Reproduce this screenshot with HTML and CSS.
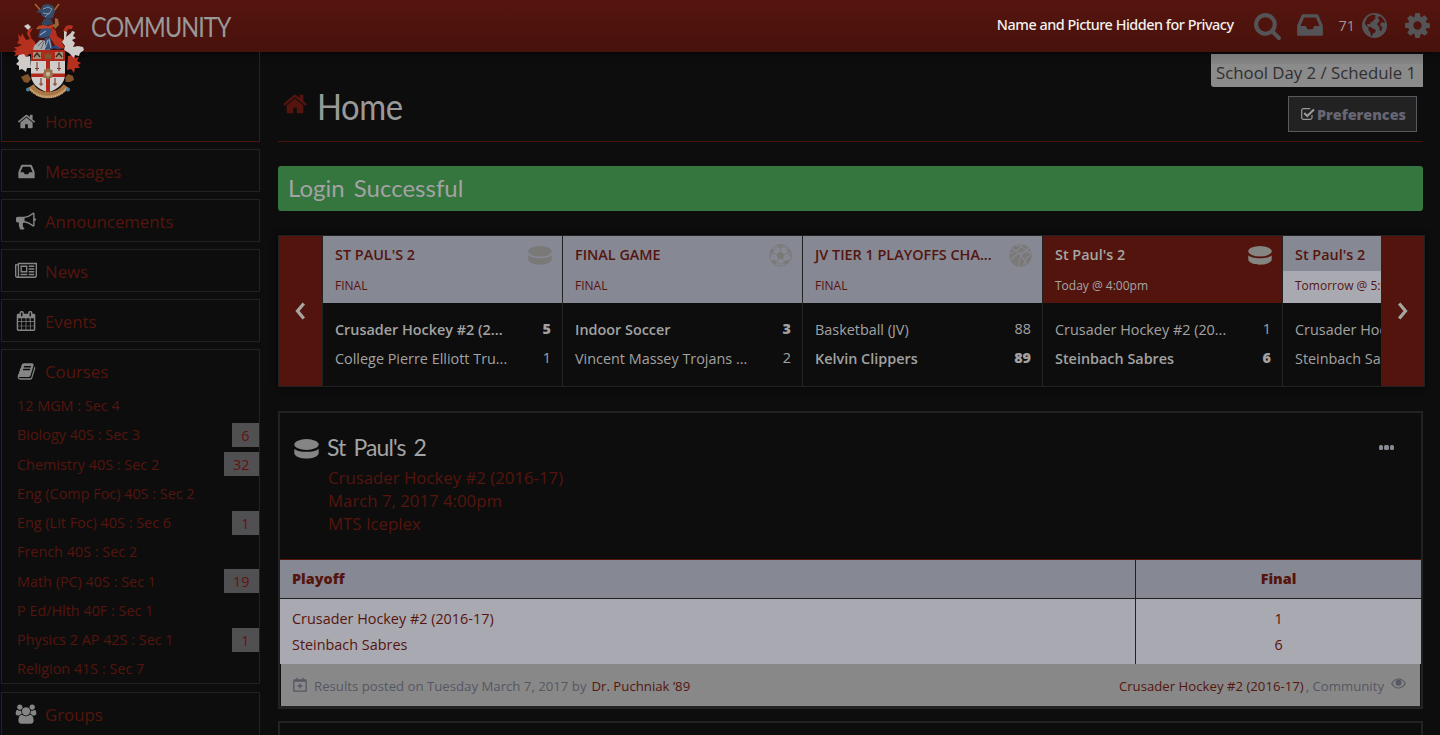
FILE: index.html
```html
<!DOCTYPE html>
<html lang="en">
<head>
<meta charset="utf-8">
<title>Community</title>
<link rel="stylesheet" href="styles.css">
</head>
<body>
<svg class="defs" width="0" height="0">
  <symbol id="home" viewBox="0 0 1792 1792"><path d="M1472 992v480q0 26-19 45t-45 19h-384v-384h-256v384h-384q-26 0-45-19t-19-45v-480q0-1 .5-3t.5-3l575-474 575 474q1 2 1 6zm223-69l-62 74q-8 9-21 11h-3q-13 0-21-7l-692-577-692 577q-12 8-24 7-13-2-21-11l-62-74q-8-10-7-23.500t11-21.500l719-599q32-26 76-26t76 26l244 204v-195q0-14 9-23t23-9h192q14 0 23 9t9 23v408l219 182q10 8 11 21.500t-7 23.500z"/></symbol>
  <symbol id="search" viewBox="0 0 1792 1792"><path d="M1216 832q0-185-131.500-316.500t-316.500-131.500-316.500 131.500-131.500 316.500 131.500 316.500 316.500 131.500 316.500-131.500 131.500-316.500zm512 832q0 52-38 90t-90 38q-54 0-90-38l-343-342q-179 124-399 124-143 0-273.500-55.500t-225-150-150-225-55.500-273.500 55.500-273.500 150-225 225-150 273.500-55.500 273.500 55.500 225 150 150 225 55.500 273.500q0 220-124 399l343 343q37 37 37 90z"/></symbol>
  <symbol id="inbox" viewBox="0 0 1792 1792"><path d="M1151 960h316q-1-3-2.500-8t-2.500-8l-212-496h-708l-212 496q-1 2-2.500 8t-2.500 8h316l95 192h320zm513 30v482q0 26-19 45t-45 19h-1408q-26 0-45-19t-19-45v-482q0-62 25-123l238-552q10-25 36.500-42t52.500-17h832q26 0 52.500 17t36.500 42l238 552q25 61 25 123z"/></symbol>
  <symbol id="gear" viewBox="0 0 1792 1792"><path d="M1152 896q0-106-75-181t-181-75-181 75-75 181 75 181 181 75 181-75 75-181zm512-109v222q0 12-8 23t-20 13l-185 28q-19 54-39 91 35 50 107 138 10 12 10 25t-9 23q-27 37-99 108t-94 71q-12 0-26-9l-138-108q-44 23-91 38-16 136-29 186-7 28-36 28h-222q-14 0-24.500-8.500t-11.500-21.500l-28-184q-49-16-90-37l-141 107q-10 9-25 9-14 0-25-11-126-114-165-168-7-10-7-23 0-12 8-23 15-21 51-66.500t54-70.500q-27-50-41-99l-183-27q-13-2-21-12.500t-8-23.500v-222q0-12 8-23t19-13l186-28q14-46 39-92-40-57-107-138-10-12-10-24 0-10 9-23 26-36 98.500-107.500t94.500-71.500q13 0 26 10l138 107q44-23 91-38 16-136 29-186 7-28 36-28h222q14 0 24.500 8.500t11.500 21.500l28 184q49 16 90 37l142-107q9-9 24-9 13 0 25 10 129 119 165 170 7 8 7 22 0 12-8 23-15 21-51 66.500t-54 70.500q26 50 41 98l183 28q13 2 21 12.500t8 23.500z"/></symbol>
  <symbol id="users" viewBox="0 0 2048 1792"><path d="M657 896q-162 5-265 128h-134q-82 0-138-40.500t-56-118.500q0-353 124-353 6 0 43.500 21t97.500 42.500 119 21.500q67 0 133-23-5 37-5 66 0 139 81 256zm1071 637q0 120-73 189.500t-194 69.500h-874q-121 0-194-69.500t-73-189.500q0-53 3.500-103.500t14-109 26.500-108.500 43-97.500 62-81 85.500-53.500 111.500-20q10 0 43 21.500t73 48 107 48 135 21.500 135-21.500 107-48 73-48 43-21.500q61 0 111.500 20t85.500 53.500 62 81 43 97.500 26.500 108.500 14 109 3.500 103.500zm-1024-1277q0 106-75 181t-181 75-181-75-75-181 75-181 181-75 181 75 75 181zm704 384q0 159-112.500 271.500t-271.500 112.500-271.500-112.500-112.500-271.500 112.500-271.500 271.500-112.500 271.500 112.500 112.500 271.500zm576 225q0 78-56 118.500t-138 40.500h-134q-103-123-265-128 81-117 81-256 0-29-5-66 66 23 133 23 59 0 119-21.500t97.500-42.500 43.500-21q124 0 124 353zm-128-609q0 106-75 181t-181 75-181-75-75-181 75-181 181-75 181 75 75 181z"/></symbol>
  <symbol id="calendar" viewBox="0 0 1792 1792"><path fill-rule="evenodd" d="M64 384q0-128 128-128h128v-96q0-160 160-160h64q160 0 160 160v96h384v-96q0-160 160-160h64q160 0 160 160v96h128q128 0 128 128v1280q0 128-128 128H192q-128 0-128-128zM448 160v288q0 32 32 32h64q32 0 32-32V160q0-32-32-32h-64q-32 0-32 32zm768 0v288q0 32 32 32h64q32 0 32-32V160q0-32-32-32h-64q-32 0-32 32zM192 640v288h288V640zm352 0v288h320V640zm384 0v288h288V640zm384 0v288h288V640zM192 992v320h288V992zm352 0v320h320V992zm384 0v320h320V992zm384 0v320h288V992zM192 1376v288h288v-288zm352 0v288h320v-288zm384 0v288h320v-288zm384 0v288h288v-288z"/></symbol>
  <symbol id="book" viewBox="0 0 1792 1792"><path d="M1703 478q40 57 18 129l-275 906q-19 64-76.500 107.500t-122.500 43.500h-923q-77 0-148.500-53.500t-99.500-131.500q-24-67-2-127 0-4 3-27t4-37q1-8-3-21.500t-3-19.500q2-11 8-21t16.500-23.500 16.500-23.500q23-38 45-91.500t30-91.500q3-10 .5-30t-.5-28q3-11 17-28t17-23q21-36 42-92t25-90q1-9-2.500-32t.5-28q4-13 22-30.500t22-22.500q19-26 42.500-84.500t27.500-96.500q1-8-3-25.500t-2-26.500q2-8 9-18t18-23 17-21q8-12 16.500-30.500t15-35 16-36 19.500-32 26.500-23.500 36-11.500 47.500 5.500l-1 3q38-9 51-9h761q74 0 114 56t18 130l-274 906q-36 119-71.500 153.500t-128.500 34.500h-869q-27 0-38 15-11 16-1 43 24 70 144 70h923q29 0 56-15.500t35-41.500l300-987q7-22 5-57 38 15 59 43zm-1064 2q-4 13 2 22.500t20 9.500h608q13 0 25.500-9.500t16.500-22.500l21-64q4-13-2-22.500t-20-9.500h-608q-13 0-25.500 9.500t-16.500 22.500zm-83 256q-4 13 2 22.500t20 9.500h608q13 0 25.500-9.500t16.500-22.500l21-64q4-13-2-22.500t-20-9.500h-608q-13 0-25.500 9.500t-16.500 22.500z"/></symbol>
  <symbol id="bullhorn" viewBox="0 0 1792 1792"><path d="M1664 640q53 0 90.500 37.500t37.500 90.500-37.500 90.500-90.500 37.500v384q0 52-38 90t-90 38q-417-347-812-380-58 19-91 66t-31 100.500 40 92.500q-20 33-23 65.500t6 58 33.500 55 48 50 61.500 50.500q-29 58-111.500 83t-168.500 11.500-132-55.500q-7-23-29.500-87.500t-32-94.500-23-89-15-101 3.500-98.500 22-110.500h-122q-66 0-113-47t-47-113v-192q0-66 47-113t113-47h480q435 0 896-384 52 0 90 38t38 90v384zm-128 604v-954q-394 302-768 343v270q377 42 768 341z"/></symbol>
  <symbol id="news" viewBox="0 0 2048 1792"><path d="M1024 512h-384v384h384v-384zm128 640v128h-640v-128h640zm0-768v640h-640v-640h640zm640 768v128h-512v-128h512zm0-256v128h-512v-128h512zm0-256v128h-512v-128h512zm0-256v128h-512v-128h512zm-1536 960v-960h-128v960q0 26 19 45t45 19 45-19 19-45zm1664 0v-1088h-1536v1088q0 33-11 64h1483q26 0 45-19t19-45zm128-1216v1216q0 80-56 136t-136 56h-1664q-80 0-136-56t-56-136v-1088h256v-128h1792z"/></symbol>
  <symbol id="soccer" viewBox="0 0 23 23"><g class="lace"><circle cx="11.500" cy="11.500" r="10.800"/><path d="M11.500 8V4M15 10.500l4-1.500M13.500 14.500l2.500 4M9.500 14.500L7 18.500M8 10.500L4 9M11.500 4L6.500 2.500M11.500 4l5-1.500M19 9l-1.500-5M19 9l3 4M16 18.500l4-1.500M16 18.500l-4.500 1.500L7 18.500M7 18.500L3 17M4 9l-3 4M4 9l1.500-5"/></g><path d="M11.500 7.500l4 2.900-1.500 4.600H9l-1.500-4.600zM8 1l3.500 2.200L15 1l-3.500-.7zM19 4l.3 4 3 2.500-.8-4zM4 4l-.3 4-3 2.500.8-4zM20.500 15.500l-4.300 1.200-.4 4 3-2zM2.500 15.500l4.300 1.200.4 4-3-2z"/></symbol>
  <symbol id="puck" viewBox="0 0 24 19"><ellipse cx="12" cy="5.200" rx="11.700" ry="5.200"/><path d="M.3 9.200C2 11.200 6.500 12.200 12 12.200S22 11.200 23.700 9.200V14C22.500 17 17.500 18.700 12 18.700S1.500 17 .3 14z"/></symbol>
  <symbol id="globe" viewBox="0 0 24 24"><path fill-rule="evenodd" d="M12 0a12 12 0 1 0 0 24 12 12 0 0 0 0-24zM5.500 3.800L9 1.900l2.600-.3 1.800 1-1.300 1.600 1.200.8-2 1.600-1.300 1.800-2.200.8.600 1.900-1.900-.8-1.900.7 1.200 2.200 2.700.3 2.600 1.800 2.400 1-.9 2.400-2.200 1-1 2.700-1-.6-.3-3.200-2-2.300.2-2.200-2.600-2-1-2.800zM15 3.600l3.300-.2 2.900 3.600 1 2.800-2.200-.9-2 .7-.6 2.300 2.300 1.900-1.200 3.400-1.600-.5-.2-3.400-2-1.500.3-2.500 2-1.400z"/></symbol>
  <symbol id="ball" viewBox="0 0 22 22"><circle cx="11" cy="11" r="10.800"/><g class="seam"><path d="M2.500 4.500C7 6.500 13 11 17 19.800M12.500 0C11 4.500 7 8 .2 9M1.500 16C5 10 12 6.300 21 8M7 1c5 1.500 10 4 14.800 9M9.500 22C9 15 12 8 19 4M14.500 21.500c-.8-4 .8-8 6.800-11"/></g></symbol>
  <symbol id="prev" viewBox="0 0 10 18"><path class="line" d="M8.300 1.500 2 9l6.300 7.500"/></symbol>
</svg>

<header class="topbar">
  <div class="brand">COMMUNITY</div>
  <nav class="tools">
    <span class="user">Name and Picture Hidden for Privacy</span>
    <svg class="t-search"><use href="#search"/></svg>
    <svg class="t-inbox"><use href="#inbox"/></svg>
    <span class="count">71</span>
    <svg class="t-globe"><use href="#globe"/></svg>
    <svg class="t-gear"><use href="#gear"/></svg>
  </nav>
</header>

<svg class="crest" viewBox="10 0 76 100">
  <path d="M35 4l7 8M59 4l-6 8" stroke="#9b6a35" stroke-width="1.600"/>
  <g fill="#b5301f">
    <path d="M33 28l-5 2-1 4 3 5-4 1-4-7-1 4-3-3 1 6-2 3 5 2-5 2-3 0 3 3-4 1 3 2-2 3 5-1-1 3 6-2 2 3 3-5 3 0 5-6-2-6-4-4-1-5z"/>
    <path d="M52 27l4 4 1 5 6 4-1 3 3 5-8 1-8-13zM66 26l4-1 3 1-1 3-4 0-2 4-3-2zM68 56l5-1 2 3 4-1-2 4 4 2-3 2 2 3-5 0-1 5-3-4-4 1z"/>
  </g>
  <g fill="#cecbc9">
    <path d="M24 26l4-2 3 3-3 3-2-2zM19 55l5-1 2 3 4-1 1 12-4 0-1 4-4-3-3 1 0-4-3-2 3-3-2-3zM64 31l3 1-1 5 5-4 1-2 3 1-2 4 3 2-4 2 3 3-2 4 5-1 5 1 1 3-4 3-1 3-4-1-1 3-5-5-5-3 1-4-3-4 2-3z"/>
    <path d="M40 40l-6 6-1 4h17l-2-9z" fill="#a9a9ab"/>
  </g>
  <path d="M38 46l5-5M41 49l3-7" stroke="#4b5666" stroke-width=".8"/>
  <path d="M43 5l5-1 5 2 2 5-2 7-6 1-5-3-1-3-5-1 5-3z" fill="#344b69"/>
  <path d="M43 9l5-2 4 2M43 13l6 1 3-5M45 17l4-4" fill="none" stroke="#8298b2" stroke-width="1"/>
  <path d="M44 19h7l2 5-9 2-3-2z" fill="#30445f"/>
  <path d="M38 26l5-1 5 1 6-2 1 2-5 3-7 0-5 0z" fill="#b94027"/>
  <path d="M40 30l5-2 7 1-2 7-7 2-5-1zM45 38l5-1 3 12-8 1z" fill="#34507a"/>
  <path d="M40 35l6-4M45 48l3-8M51 48l-2-9" stroke="#8ea2ba" stroke-width="1.200"/>
  <path d="M55 18l3 1 1 6-4 4-2-4 2-1zM39 27l-3 1 2 2z" fill="#92673a"/><path d="M51 48l4-3 5 3 1 1z" fill="#244889"/>
  <path d="M31 50h34v24q0 13-17 18.500Q31 87 31 74z" fill="#d0ccca"/>
  <path d="M31 50h34v11H31zM46 61h4v31l-2 .5-2-.5zM31 73.500h34v3.500H31z" fill="#b0281b"/>
  <path d="M33 52h8v7h-8zM55 52h8v7h-8z" fill="#a58c72"/><path d="M34 57l3-4 3 4M56 57l3-4 3 4" stroke="#3c2a25" stroke-width="1.300" fill="none"/>
  <path d="M44 53l2 2 2-3 2 3 2-2-1 6h-6z" fill="#7f572e"/>
  <path d="M37 62v9M35 68.500h4M59 62v9M57 68.500h4M41 78v8M39 84h4M55 78v8M53 84h4" stroke="#7d3a32" stroke-width="1.100"/>
  <path d="M48 68l2 1.500 2.500.5 0 2.500 1 1.500-1.500 2 0 2-2.500 0L48 79.500 46 78l-2.500 0 0-2.500L42.500 74l1.500-2 0-2.500 2.500 0z" fill="#96744e"/><circle cx="48" cy="74" r="2.200" fill="#c6b295"/>
  <path d="M21 77l4-2 3-1 3 5-3 4-4-1zM65 78l3-4 5 2 1 4-4 2-4 0z" fill="#83542b"/>
  <path d="M31 86q6 9 17 9t18-9" fill="none" stroke="#a87645" stroke-width="6"/>
  <path d="M29 88q8 9 19 9t19-9" fill="none" stroke="#d1ab7c" stroke-width="2.600" stroke-dasharray="1.300 .6"/>
  <circle cx="28" cy="89.500" r="2" fill="#527f98"/><circle cx="68" cy="89.500" r="2" fill="#527f98"/>
</svg>

<div class="page">
  <aside class="side">
    <section class="box box-home"><a class="entry"><svg><use href="#home"/></svg>Home</a></section>
    <section class="box"><a class="entry"><svg><use href="#inbox"/></svg>Messages</a></section>
    <section class="box"><a class="entry"><svg class="i20"><use href="#bullhorn"/></svg>Announcements</a></section>
    <section class="box"><a class="entry"><svg class="wide"><use href="#news"/></svg>News</a></section>
    <section class="box"><a class="entry"><svg class="i20"><use href="#calendar"/></svg>Events</a></section>
    <section class="box box-courses"><a class="entry"><svg><use href="#book"/></svg>Courses</a>
      <ul class="courses">
        <li>12 MGM : Sec 4</li>
        <li>Biology 40S : Sec 3<span class="badge">6</span></li>
        <li>Chemistry 40S : Sec 2<span class="badge">32</span></li>
        <li>Eng (Comp Foc) 40S : Sec 2</li>
        <li>Eng (Lit Foc) 40S : Sec 6<span class="badge">1</span></li>
        <li>French 40S : Sec 2</li>
        <li>Math (PC) 40S : Sec 1<span class="badge">19</span></li>
        <li>P Ed/Hlth 40F : Sec 1</li>
        <li>Physics 2 AP 42S : Sec 1<span class="badge">1</span></li>
        <li>Religion 41S : Sec 7</li>
      </ul>
    </section>
    <section class="box box-groups"><a class="entry"><svg class="wide"><use href="#users"/></svg>Groups</a></section>
  </aside>

  <main class="main">
    <div class="day">School Day 2 / Schedule 1</div>
    <div class="title">
      <svg><use href="#home"/></svg><h1>Home</h1>
      <button class="prefs"><svg viewBox="0 0 14 12"><path d="M11 7v2.500q0 1.800-1.800 1.800H2.500Q.7 11.300.7 9.500v-7Q.7.700 2.500.7h6.700"/><path class="tick" d="M3.200 5l3 3L13 1.500"/></svg>Preferences</button>
    </div>
    <div class="notice">Login Successful</div>

    <div class="ticker">
      <button class="arrow"><svg><use href="#prev"/></svg></button>
      <div class="games">
        <article class="game">
          <div class="head"><b>ST PAUL'S 2</b><small>FINAL</small><svg class="puck"><use href="#puck"/></svg></div>
          <div class="row win"><span>Crusader Hockey #2 (2...</span><i>5</i></div>
          <div class="row"><span>College Pierre Elliott Tru...</span><i>1</i></div>
        </article>
        <article class="game">
          <div class="head"><b>FINAL GAME</b><small>FINAL</small><svg class="round"><use href="#soccer"/></svg></div>
          <div class="row win"><span>Indoor Soccer</span><i>3</i></div>
          <div class="row"><span>Vincent Massey Trojans ...</span><i>2</i></div>
        </article>
        <article class="game">
          <div class="head"><b>JV TIER 1 PLAYOFFS CHA...</b><small>FINAL</small><svg class="round"><use href="#ball"/></svg></div>
          <div class="row"><span>Basketball (JV)</span><i>88</i></div>
          <div class="row win"><span>Kelvin Clippers</span><i>89</i></div>
        </article>
        <article class="game today">
          <div class="head"><b>St Paul's 2</b><small>Today @ 4:00pm</small><svg class="puck"><use href="#puck"/></svg></div>
          <div class="row"><span>Crusader Hockey #2 (20...</span><i>1</i></div>
          <div class="row win"><span>Steinbach Sabres</span><i>6</i></div>
        </article>
        <article class="game next">
          <div class="head"><b>St Paul's 2</b><small>Tomorrow @ 5:00pm</small></div>
          <div class="row"><span>Crusader Hockey #2 (20...</span></div>
          <div class="row"><span>Steinbach Sabres</span></div>
        </article>
      </div>
      <button class="arrow flip"><svg><use href="#prev"/></svg></button>
    </div>

    <section class="card">
      <div class="card-top">
        <svg class="puck"><use href="#puck"/></svg>
        <div class="info"><h2>St Paul's 2</h2><p>Crusader Hockey #2 (2016-17)</p><p>March 7, 2017 4:00pm</p><p>MTS Iceplex</p></div>
        <div class="dots"><span></span><span></span><span></span></div>
      </div>
      <div class="score score-head"><div>Playoff</div><div>Final</div></div>
      <div class="score score-body"><div><p>Crusader Hockey #2 (2016-17)</p><p>Steinbach Sabres</p></div><div><p>1</p><p>6</p></div></div>
      <footer>
        <svg class="cal" viewBox="0 0 14 15"><path d="M.8 4h12.400v10.200H.8zM.8 3h12.400M4 .8v2.700M10 .8v2.700M7 6.500v5M4.500 9h5"/></svg>
        <span class="posted">Results posted on Tuesday March 7, 2017 by</span><a>Dr. Puchniak ’89</a>
        <a class="team">Crusader Hockey #2 (2016-17)</a><span class="comm">, Community</span>
        <svg class="eye" viewBox="0 0 15 11"><path d="M.7 5.500Q3.500 1 7.500 1t6.800 4.500Q11.500 10 7.500 10T.7 5.500z"/><circle cx="7.500" cy="4.700" r="3"/></svg>
      </footer>
    </section>
    <section class="card card-next"></section>
  </main>
</div>
</body>
</html>
```
FILE: styles.css
```css
* { box-sizing: border-box; }
html { overflow: hidden; }
body { margin: 0; width: 1440px; height: 735px; overflow: hidden; background: #0d0d0d; font-family: "Open Sans", sans-serif; position: relative; }
h1, h2, p, ul { margin: 0; padding: 0; font-weight: 400; }
svg { fill: currentColor; flex: none; display: block; }
button { font: inherit; border: 0; padding: 0; }
.defs { position: absolute; }

.topbar { height: 52px; background: linear-gradient(#55150e, #48110c); display: flex; justify-content: space-between; padding: 0 9px 0 91px; box-shadow: 0 1px 8px rgba(0,0,0,.6); }
.brand { font: 26px/54px Lato, sans-serif; letter-spacing: -1px; color: #999; transform: scaleX(.9); transform-origin: left; }
.tools { display: flex; align-items: center; color: #545456; height: 50px; }
.user { font: 500 14.400px/50px "Noto Sans", sans-serif; color: #f4f0ee; letter-spacing: -.48px; margin-right: 18px; }
.t-search { width: 31px; height: 29px; margin-right: 12px; }
.t-inbox { width: 30px; height: 30px; margin-right: 14px; }
.count { font-size: 14.400px; color: #999; margin-right: 7px; }
.t-globe { width: 25px; height: 25px; margin-right: 16px; }
.t-gear { width: 29px; height: 29px; margin-right: -1px; }
.crest { position: absolute; left: 10px; top: 0; width: 76px; height: 100px; fill: none; }

.page { display: flex; height: 683px; border-left: 1px solid #080b16; }
.side { width: 259px; display: flex; flex-direction: column; gap: 7px; color: #55150e; }
.box { border: 1px solid #222; height: 43px; flex: none; }
.box-home { height: 90px; border-color: #4a140f; border-top: 0; padding-top: 48px; }
.box-courses { height: 335px; }
.box-groups { margin-top: 1px; height: 50px; }
.entry { display: flex; align-items: center; height: 43px; font-size: 16.800px; padding-left: 43px; }
.entry svg { color: #858585; width: 19px; height: 19px; margin: -1px 9px 0 -28px; }
.entry svg.i20 { width: 20px; height: 20px; margin-left: -29px; }
.entry svg.wide { width: 22px; height: 20px; margin: -1px 8px 0 -30px; }
.courses { list-style: none; font-size: 14.400px; margin-top: -2px; }
.courses li { height: 29.250px; display: flex; justify-content: space-between; align-items: center; padding-left: 15px; }
.badge { background: #505052; font-size: 14.400px; line-height: 26px; height: 24px; padding: 0 9.500px 0 9px; color: #64120e; }

.main { width: 1147px; margin-left: 18px; position: relative; }
.day { position: absolute; right: 2px; top: 2px; width: 212px; height: 33px; background: linear-gradient(#777, #858585 30%, #8b8b8b 32%, #8b8b8b); border-radius: 0 0 0 3px; font-size: 16.800px; line-height: 37px; color: #2f2f31; padding-left: 5px; white-space: nowrap; }
.title { width: 1145px; height: 90px; border-bottom: 1px solid #4a130d; display: flex; padding: 0 6px 0 4px; color: #55150e; }
.title > svg { width: 26px; height: 26px; margin-top: 39px; }
h1 { font: 37px/42px Lato, sans-serif; color: #999; margin: 33px auto 0 9px; letter-spacing: -.5px; transform: scaleX(.885); transform-origin: left; }
.prefs { width: 129px; height: 36px; margin-top: 44px; border: 1px solid #595960; background: #222; color: #686672; display: flex; align-items: center; font-weight: 800; font-size: 14.400px; padding-left: 12px; gap: 2px; }
.prefs svg { width: 14px; height: 12px; fill: none; stroke: #999; stroke-width: 1.200; }
.tick { stroke-width: 2.200; }
.notice { width: 1145px; height: 45px; margin-top: 24px; background: #35753e; border-radius: 3px; color: #a3a3a3; font: 24px/44px Lato, sans-serif; word-spacing: 3px; padding-left: 10px; }

.ticker { margin-top: 24px; height: 152px; border: 1px solid #222; display: flex; color: #a2a2a2; box-shadow: 0 0 6px #050505; }
.arrow { width: 44px; background: #53140d; display: flex; align-items: center; justify-content: center; color: #a6a6a3; border-right: 1px solid #222; }
.arrow svg { width: 11px; height: 18px; }
.line { fill: none; stroke: #a6a6a3; stroke-width: 3.200; }
.flip { width: 43px; transform: scaleX(-1); border: 0; }
.games { width: 1058px; display: flex; overflow: hidden; }
.game { width: 240px; flex: none; border-right: 1px solid #222; font-size: 14.400px; }
.head { height: 67px; background: #868893; color: #54150f; position: relative; padding: 7px 12px 0; margin-bottom: 12px; }
.head b { display: block; font-weight: 600; line-height: 24px; }
.head small { display: block; font-size: 12px; line-height: 20px; margin-top: 9px; }
.head svg { position: absolute; color: #7a7977; }
.head .puck { right: 10px; top: 10px; width: 24px; height: 19px; }
.head .round { right: 10px; top: 8px; width: 23px; height: 23px; }
.seam { fill: none; stroke: #868893; stroke-width: 1; }
.lace { fill: none; stroke: currentColor; stroke-width: .9; }
.row { display: flex; justify-content: space-between; padding: 0 11px 0 12px; line-height: 29px; }
.row i { font-style: normal; margin-top: -1px; }
.win { font-weight: 600; }
.win i { font-weight: 800; }
.today .head { background: #53140d; color: #a6a6a3; }
.today .head svg { color: #858582; }
.next .head { background: linear-gradient(#868893 35px, #a9a9b2 35px); }
.next .row { white-space: nowrap; }

.card { width: 1145px; margin-top: 24px; height: 298px; border: 2px solid #222; border-bottom-width: 3px; }
.card-top { height: 146px; display: flex; padding: 19px 27px 0 14px; color: #55150e; }
.card-top .puck { width: 25px; height: 20px; color: #858585; margin-top: 7px; }
.info { flex: 1; padding-left: 9px; }
h2 { font: 23px/30px Lato, sans-serif; color: #a3a3a3; margin: 0 0 4px -1px; letter-spacing: -.9px; word-spacing: 3px; }
.info p { font-size: 16.800px; line-height: 23px; }
.dots { display: flex; gap: 1px; margin-top: 13px; }
.dots span { width: 4.500px; height: 5px; border-radius: 1.500px; background: #868893; }
.score { display: grid; grid-template-columns: 855px 286px; font-size: 14.400px; color: #55150e; }
.score > div { padding-left: 12px; }
.score > div + div { border-left: 1px solid #222; padding: 0; text-align: center; }
.score-head { height: 40px; background: #868893; border-top: 1px solid #53140d; border-bottom: 1px solid #222; font-weight: 800; line-height: 38px; }
.score-body { height: 65px; background: #a9a9b2; line-height: 26px; }
.score-body > div { padding-top: 7px !important; }
footer { height: 42px; margin: 0 1px; background: #888; color: #555763; display: flex; align-items: center; font-size: 13.200px; padding: 2px 14px 0 12px; }
footer a { color: #55150e; margin-left: 5px; }
.cal { width: 14px; height: 15px; fill: none; stroke: #555763; stroke-width: 1.300; margin: -3px 7px 0 0; }
footer .team { margin-left: auto; }
.comm { margin-left: 2px; }
.eye { width: 15px; height: 11px; margin: -6px 0 0 7px; }
.eye path { fill: none; stroke: #555763; stroke-width: 1.200; }
.card-next { margin-top: 12px; height: 14px; border-bottom: 0; }
```
